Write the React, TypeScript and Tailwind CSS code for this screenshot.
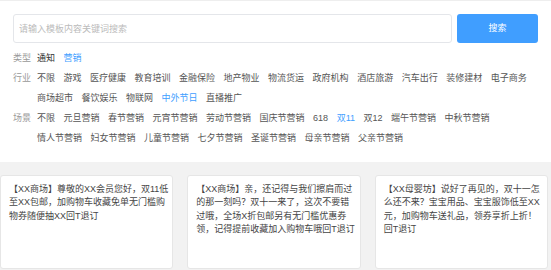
const types = [
  { name: '通知', active: false },
  { name: '营销', active: true },
]

const industries = [
  '不限', '游戏', '医疗健康', '教育培训', '金融保险', '地产物业', '物流货运', '政府机构',
  '酒店旅游', '汽车出行', '装修建材', '电子商务', '商场超市', '餐饮娱乐', '物联网', '中外节日', '直播推广',
]

const scenes = [
  '不限', '元旦营销', '春节营销', '元宵节营销', '劳动节营销', '国庆节营销', '618', '双11', '双12',
  '端午节营销', '中秋节营销', '情人节营销', '妇女节营销', '儿童节营销', '七夕节营销', '圣诞节营销',
  '母亲节营销', '父亲节营销',
]

const templates = [
  [
    '【XX商场】尊敬的XX会员您好，双11低',
    '至XX包邮，加购物车收藏免单无门槛购',
    '物券随便抽XX回T退订',
  ],
  [
    '【XX商场】亲，还记得与我们擦肩而过',
    '的那一刻吗？双十一来了，这次不要错',
    '过哦，全场X折包邮另有无门槛优惠券',
    '领，记得提前收藏加入购物车哦回T退订',
  ],
  [
    '【XX母婴坊】说好了再见的，双十一怎',
    '么还不来？宝宝用品、宝宝服饰低至XX',
    '元，加购物车送礼品，领券享折上折！',
    '回T退订',
  ],
]

function FilterRow({ label, items, active }: { label: string; items: string[]; active: string[] }) {
  return (
    <div className="flex leading-[20px]">
      <span className="w-[24px] shrink-0 text-[#999]">{label}</span>
      <ul className="flex flex-1 flex-wrap gap-x-[8.5px]">
        {items.map((it) => (
          <li
            key={it}
            className={active.includes(it) ? 'text-[#409eff]' : 'text-[#555]'}
          >
            {it}
          </li>
        ))}
      </ul>
    </div>
  )
}

export default function App() {
  return (
    <div className="min-h-[270px] bg-[#f2f2f2] font-['Liberation_Sans','Noto_Sans_CJK_SC',sans-serif] text-[9px]">
      <section className="border-t border-[#eee] bg-white px-[13px] pt-[13px] pb-[14px]">
        <div className="flex gap-[5px]">
          <input
            className="h-[29px] flex-1 rounded-[3px] border border-[#e4e6ea] pl-[5px] text-[9px] outline-none placeholder:text-[#bbb]"
            placeholder="请输入模板内容关键词搜索"
          />
          <button className="h-[29px] w-[81px] rounded-[3px] bg-[#409eff] text-[9px] text-white">
            搜索
          </button>
        </div>

        <div className="mt-[5px]">
          <div className="flex leading-[20px]">
            <span className="w-[24px] shrink-0 text-[#999]">类型</span>
            <ul className="flex gap-x-[8.5px]">
              {types.map((t) => (
                <li key={t.name} className={t.active ? 'text-[#409eff]' : 'text-[#333]'}>
                  {t.name}
                </li>
              ))}
            </ul>
          </div>
          <FilterRow label="行业" items={industries} active={['中外节日']} />
          <FilterRow label="场景" items={scenes} active={['双11']} />
        </div>
      </section>

      <section className="grid grid-cols-3 gap-[14px] pt-[13px] pr-[3px]">
        {templates.map((lines, i) => (
          <div
            key={i}
            className="h-[94px] rounded-[3px] border border-[#e6e6e6] bg-white px-[8px] pt-[7px] leading-[13.3px] text-[#444]"
          >
            {lines.map((l) => (
              <p key={l} className="whitespace-nowrap">
                {l}
              </p>
            ))}
          </div>
        ))}
      </section>
    </div>
  )
}
